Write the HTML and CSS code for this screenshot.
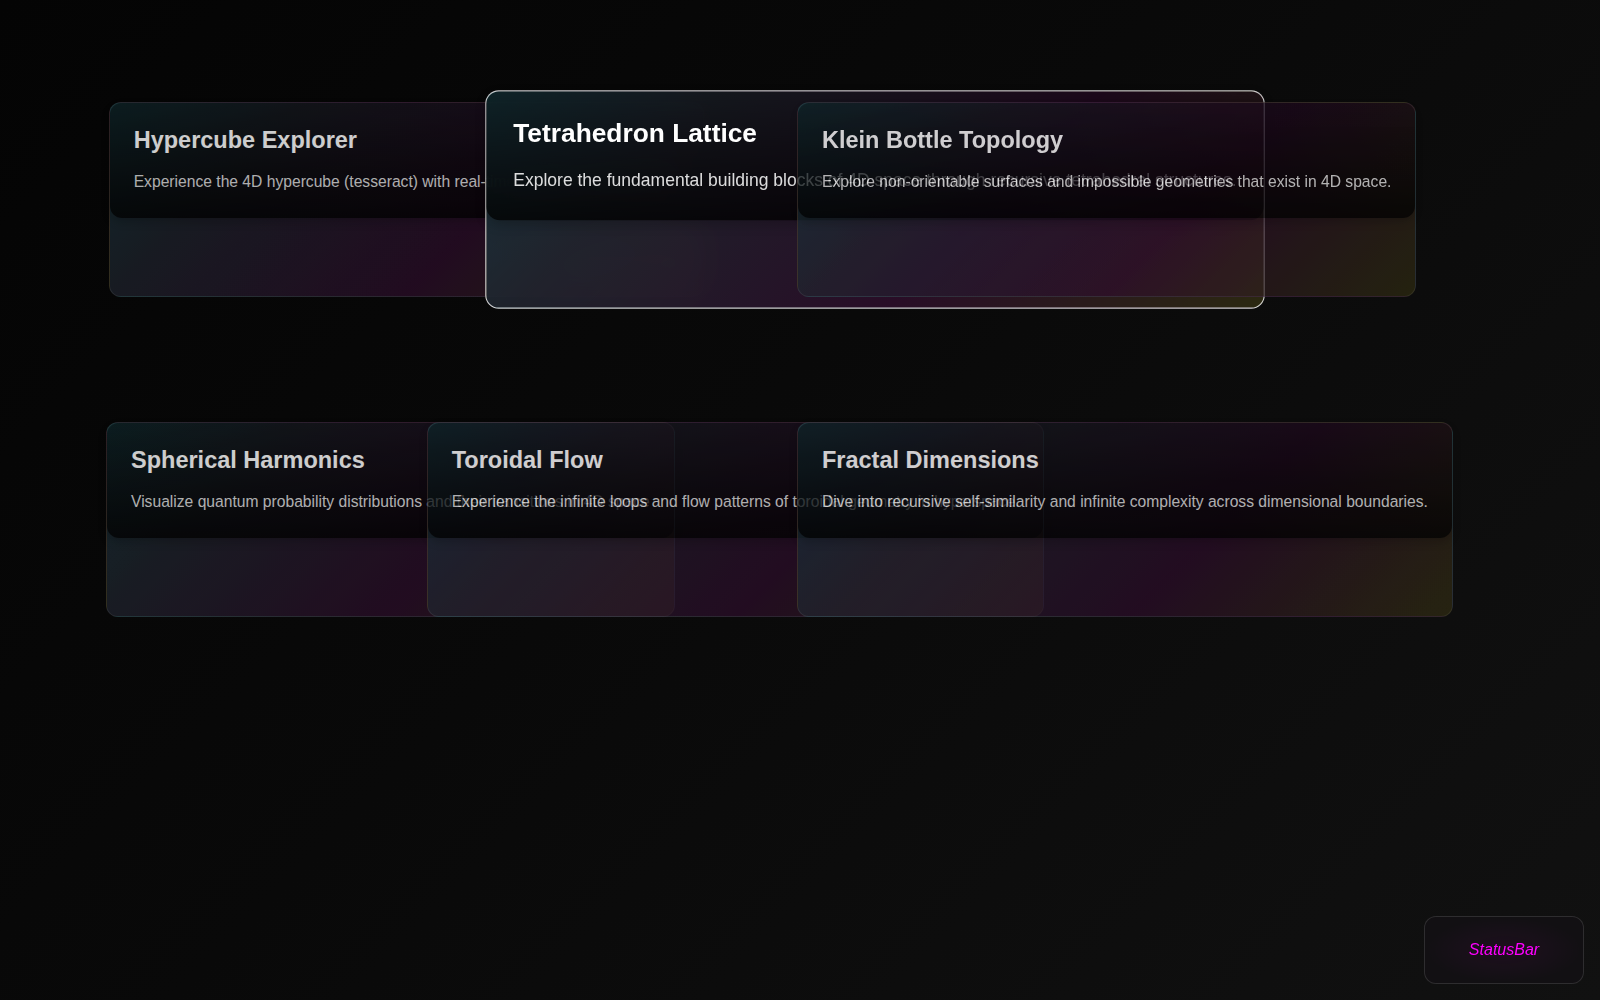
FILE: index.html
```html
<!DOCTYPE html>
<html lang="en">
<head>
<meta charset="utf-8">
<title>Dimensional Explorer</title>
<link rel="stylesheet" href="styles.css">
</head>
<body>
<main class="gallery">
  <article class="card card--hypercube">
    <div class="card-head">
      <h3 class="card-title">Hypercube Explorer</h3>
      <p class="card-desc">Experience the 4D hypercube (tesseract) with real-time rotation and projection.</p>
    </div>
    <div class="card-body"></div>
  </article>
  <article class="card card--tetra card--active">
    <div class="card-head">
      <h3 class="card-title">Tetrahedron Lattice</h3>
      <p class="card-desc">Explore the fundamental building blocks of 4D space through recursive tetrahedral structures.</p>
    </div>
    <div class="card-body"></div>
  </article>
  <article class="card card--klein">
    <div class="card-head">
      <h3 class="card-title">Klein Bottle Topology</h3>
      <p class="card-desc">Explore non-orientable surfaces and impossible geometries that exist in 4D space.</p>
    </div>
    <div class="card-body"></div>
  </article>
  <article class="card card--spherical">
    <div class="card-head">
      <h3 class="card-title">Spherical Harmonics</h3>
      <p class="card-desc">Visualize quantum probability distributions and their transitions in 4D space</p>
    </div>
    <div class="card-body"></div>
  </article>
  <article class="card card--toroidal">
    <div class="card-head">
      <h3 class="card-title">Toroidal Flow</h3>
      <p class="card-desc">Experience the infinite loops and flow patterns of toroidal geometry in hyperspace.</p>
    </div>
    <div class="card-body"></div>
  </article>
  <article class="card card--fractal">
    <div class="card-head">
      <h3 class="card-title">Fractal Dimensions</h3>
      <p class="card-desc">Dive into recursive self-similarity and infinite complexity across dimensional boundaries.</p>
    </div>
    <div class="card-body"></div>
  </article>
</main>
<div class="status-bar"><span class="status-label">StatusBar</span></div>
</body>
</html>
```
FILE: styles.css
```css
* { box-sizing: border-box; }

html, body {
  margin: 0;
  height: 100%;
}

body {
  min-height: 1000px;
  background: linear-gradient(135deg, #040404 0%, #090909 45%, #111111 100%);
  font-family: "Liberation Sans", Arial, sans-serif;
  color: #fff;
  overflow: hidden;
}

.gallery {
  display: grid;
  grid-template-columns: 2.7px 318px 100.3px 270px 660px;
  grid-template-rows: 195px 195px;
  row-gap: 125px;
  padding: 102.3px 0 0 106px;
}

.card {
  justify-self: start;
  width: max-content;
  height: 195px;
  display: flex;
  flex-direction: column;
  border: 1px solid rgba(255, 255, 255, 0.09);
  border-radius: 12px;
  background: linear-gradient(135deg,
      rgba(22, 58, 64, 0.86) 0%,
      rgba(33, 38, 48, 0.86) 24%,
      rgba(46, 14, 44, 0.86) 62%,
      rgba(49, 46, 18, 0.86) 100%);
  opacity: 0.8;
  white-space: nowrap;
}

.card--hypercube { grid-row: 1; grid-column: 2 / -1; }
.card--tetra     { grid-row: 1; grid-column: 4 / -1; }
.card--klein     { grid-row: 1; grid-column: 5 / -1; }
.card--spherical { grid-row: 2; grid-column: 1 / -1; }
.card--toroidal  { grid-row: 2; grid-column: 3 / -1; }
.card--fractal   { grid-row: 2; grid-column: 5 / -1; }

.card--active {
  opacity: 1;
  transform: scale(1.12);
  border-color: rgba(255, 255, 255, 0.78);
  backdrop-filter: blur(16px);
}

.card-head {
  padding: 24px;
  border-radius: 12px;
  background: linear-gradient(180deg, rgba(0, 0, 0, 0.3) 0%, rgba(0, 0, 0, 0.78) 100%);
  box-shadow: 0 4px 10px rgba(0, 0, 0, 0.2);
}

.card-title {
  margin: 0 0 15.5px;
  font-size: 23.5px;
  line-height: 27px;
  font-weight: 700;
  color: #ffffff;
}

.card-desc {
  margin: 0;
  font-size: 15.65px;
  line-height: 24px;
  color: rgba(255, 255, 255, 0.86);
}

.card-body {
  flex: 1;
}

.status-bar {
  position: fixed;
  right: 16px;
  bottom: 16px;
  width: 160px;
  height: 68px;
  display: flex;
  align-items: center;
  justify-content: center;
  border: 1px solid rgba(255, 255, 255, 0.12);
  border-radius: 12px;
  background: radial-gradient(ellipse at center, rgba(255, 0, 255, 0.05) 0%, rgba(255, 0, 255, 0) 70%), #121013;
}

.status-label {
  font-family: "Liberation Sans", Arial, sans-serif;
  font-style: italic;
  font-size: 16px;
  color: #ff00ff;
}
```
